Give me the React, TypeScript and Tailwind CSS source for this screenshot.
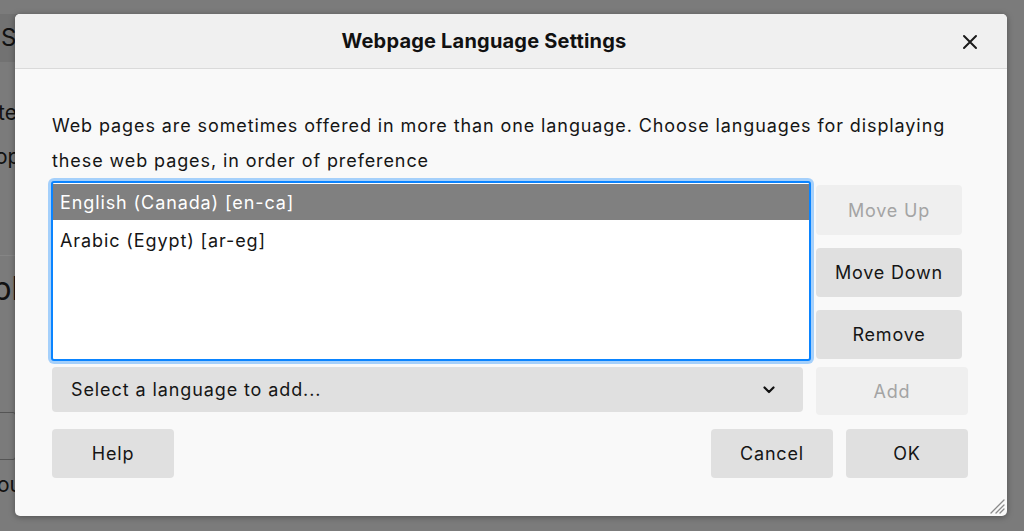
import React from 'react'

const font = { fontFamily: 'Inter, "Noto Sans", sans-serif' }

const Button: React.FC<{ label: string; disabled?: boolean; className?: string }> = ({ label, disabled, className }) => (
    <button
        className={
            'flex items-center justify-center rounded-[4px] text-[18px] tracking-[0.8px] ' +
            (disabled ? 'bg-[#efefef] text-[#a4a4a4] ' : 'bg-[#e0e0e0] text-[#151515] ') +
            (className ?? '')
        }
    >
        {label}
    </button>
)

// dimmed page behind the dialog, only its left edge shows
const Backdrop: React.FC = () => (
    <div className="flex flex-col w-[60px] text-[#111] whitespace-nowrap">
        <div className="h-[14px]" />
        <div className="h-[48px] bg-[#727272] flex items-center text-[24px] pl-[1px]">Status</div>
        <div className="h-[76px] flex items-end text-[21px] ml-[-2px] pb-[10px]">ter</div>
        <div className="h-[40px] flex items-end text-[21px] ml-[-5px] pb-[6px]">ope</div>
        <div className="h-[78px] border-b border-[#858585]" />
        <div className="h-[66px] flex items-center text-[32px] ml-[-8px]">bli</div>
        <div className="h-[90px]" />
        <div className="h-[48px] w-[40px] border border-[#555] rounded-[3px] ml-[-24px] flex items-center justify-end pr-[22px]">
            <div className="w-[4px] h-[12px] bg-[#4a7fa8]" />
        </div>
        <div className="h-[50px] flex items-center text-[21px] ml-[-3px]">ou</div>
    </div>
)

export default function App() {
    return (
        <div className="relative w-[1024px] h-[531px] overflow-hidden bg-[#7b7b7b]" style={font}>
            <Backdrop />

            <div className="absolute left-[15px] top-[14px] w-[992px] h-[502px] rounded-[5px] bg-[#f9f9f9] shadow-[0_1px_6px_rgba(0,0,0,0.35)] flex flex-col overflow-hidden">
                <div className="h-[55px] shrink-0 bg-[#f0f0f0] border-b border-[#dadada] flex items-center justify-center relative pr-[54px]">
                    <span className="text-[20px] font-bold tracking-[0.2px] text-[#111]">Webpage Language Settings</span>
                    <svg className="absolute right-[29px] top-[20px]" width="16" height="16" viewBox="0 0 16 16">
                        <path d="M2 2 L14 14 M14 2 L2 14" stroke="#1a1a1a" strokeWidth="2" strokeLinecap="round" />
                    </svg>
                </div>

                <div className="pl-[37px] pr-[39px] text-[#151515]">
                    <p className="mt-[39px] text-[18px] leading-[35px] tracking-[0.9px]">
                        Web pages are sometimes offered in more than one language. Choose languages for displaying
                        <br />
                        these web pages, in order of preference
                    </p>

                    <div className="flex items-start">
                        <div className="mt-[3px] ml-[-1px] w-[760px] h-[180px] bg-white border-2 border-[#0a84ff] rounded-[3px] ring-[3px] ring-[#0a84ff]/35 pt-[1px] text-[18px] tracking-[0.9px]">
                            <div className="h-[36px] bg-[#808080] text-white flex items-center pl-[7px]">English (Canada) [en-ca]</div>
                            <div className="h-[40px] flex items-center pl-[7px]">Arabic (Egypt) [ar-eg]</div>
                        </div>
                        <div className="ml-[5px] pt-[7px] flex flex-col gap-[13px]">
                            <Button label="Move Up" disabled className="w-[146px] h-[50px]" />
                            <Button label="Move Down" className="w-[146px] h-[49px]" />
                            <Button label="Remove" className="w-[146px] h-[49px]" />
                        </div>
                    </div>

                    <div className="flex items-start mt-[6px]">
                        <div className="w-[751px] h-[45px] rounded-[4px] bg-[#e0e0e0] flex items-center justify-between pl-[19px] pr-[28px] text-[18px] tracking-[0.9px]">
                            <span>Select a language to add...</span>
                            <svg width="12" height="8" viewBox="0 0 12 8">
                                <path d="M1.5 1.5 L6 6 L10.5 1.5" fill="none" stroke="#111" strokeWidth="2.2" strokeLinecap="round" strokeLinejoin="round" />
                            </svg>
                        </div>
                        <Button label="Add" disabled className="ml-[13px] w-[152px] h-[48px]" />
                    </div>

                    <div className="flex items-center mt-[14px]">
                        <Button label="Help" className="w-[122px] h-[49px]" />
                        <div className="flex-1" />
                        <Button label="Cancel" className="w-[122px] h-[49px]" />
                        <Button label="OK" className="ml-[13px] w-[122px] h-[49px]" />
                    </div>
                </div>

                <svg className="absolute right-[2px] bottom-[2px]" width="17" height="17" viewBox="0 0 17 17">
                    <path d="M16 3 L3 16 M16 8 L8 16 M16 12 L12 16" stroke="#8a8a8a" strokeWidth="1.3" strokeLinecap="round" />
                </svg>
            </div>
        </div>
    )
}
